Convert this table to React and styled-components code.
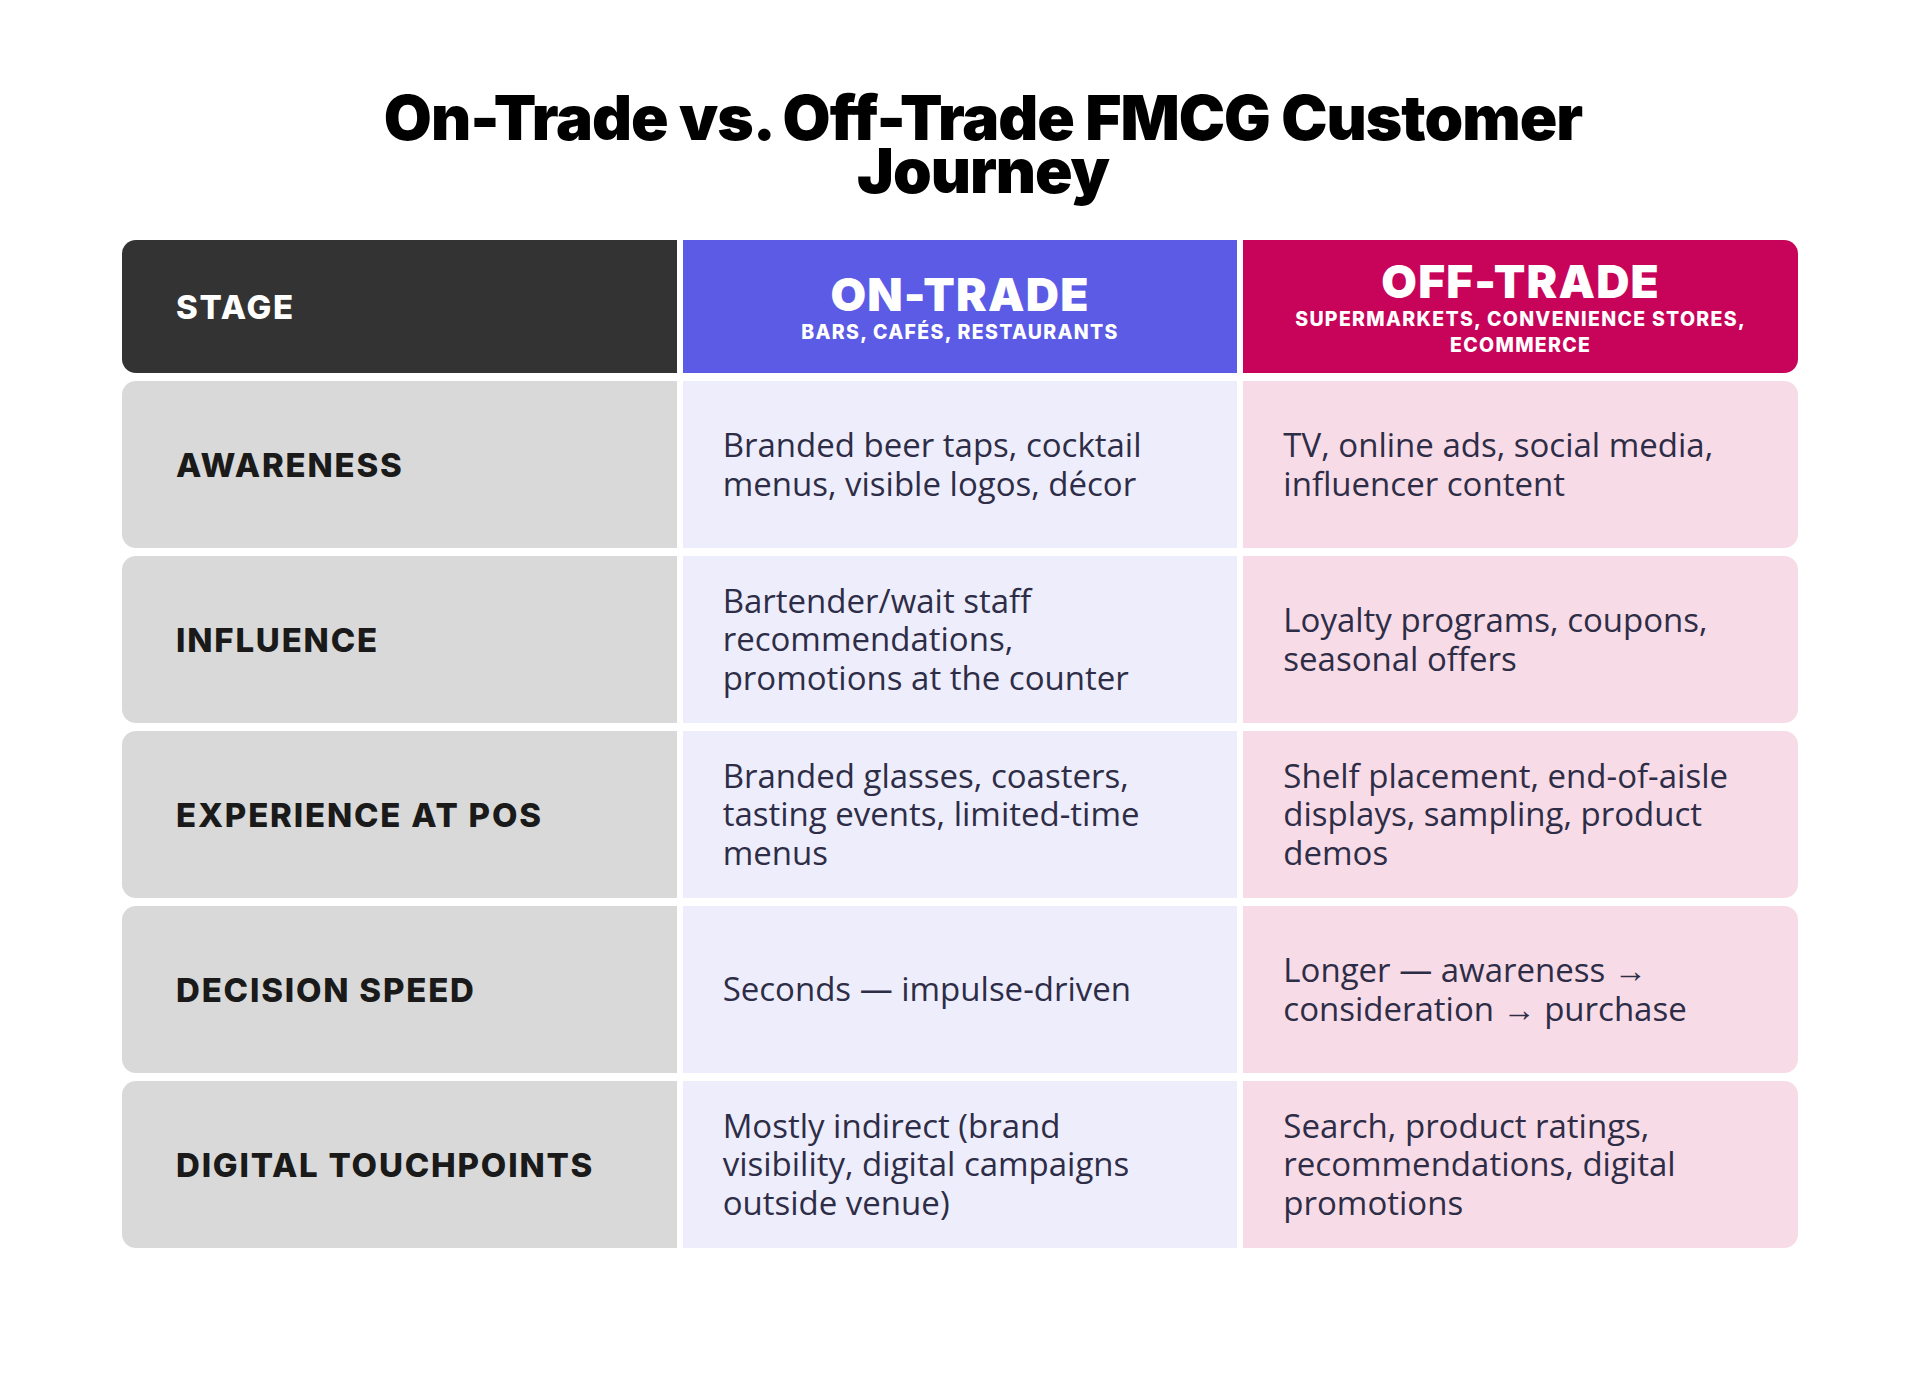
import React from "react";
import styled, { createGlobalStyle } from "styled-components";

const GlobalStyle = createGlobalStyle`
  body {
    margin: 0;
    background: #ffffff;
  }
`;

const Page = styled.div`
  width: 1920px;
  min-height: 1379px;
  padding-top: 91px;
  box-sizing: border-box;
  background: #ffffff;
`;

const Title = styled.h1`
  margin: 0 0 43px;
  padding-left: 46px;
  text-align: center;
  font-family: Inter, "Liberation Sans", sans-serif;
  font-weight: 900;
  font-size: 62px;
  line-height: 53px;
  letter-spacing: -1px;
  color: #000000;
`;

const Table = styled.div`
  width: 1676px;
  margin: 0 auto;
  display: flex;
  flex-direction: column;
  gap: 8px;
`;

const Row = styled.div`
  display: grid;
  grid-template-columns: 1fr 1fr 1fr;
  gap: 6px;
  height: ${(p) => (p.$head ? "133px" : "167px")};

  & > div:first-child {
    border-radius: 14px 0 0 14px;
  }
  & > div:last-child {
    border-radius: 0 14px 14px 0;
  }
`;

const StageCell = styled.div`
  display: flex;
  align-items: center;
  padding-left: 54px;
  background: ${(p) => (p.$head ? "#333333" : "#d9d9d9")};
  color: ${(p) => (p.$head ? "#ffffff" : "#1a1a1a")};
  font-family: Inter, "Liberation Sans", sans-serif;
  font-weight: 800;
  font-size: 33px;
  letter-spacing: 1.8px;
`;

const HeadCell = styled.div`
  display: flex;
  flex-direction: column;
  align-items: center;
  justify-content: center;
  text-align: center;
  background: ${(p) => p.$color};
  color: #ffffff;
  font-family: Inter, "Liberation Sans", sans-serif;
`;

const HeadTitle = styled.div`
  font-weight: 900;
  font-size: 46px;
  line-height: 50px;
  letter-spacing: 1.2px;
`;

const HeadSub = styled.div`
  font-weight: 800;
  font-size: 19.5px;
  line-height: 26px;
  letter-spacing: 1.3px;
  padding: 0 38px;
`;

const BodyCell = styled.div`
  display: flex;
  align-items: center;
  padding: 0 40px;
  background: ${(p) => p.$color};
  color: #2e2d47;
  font-family: "Open Sans", "Noto Sans", sans-serif;
  font-size: 33px;
  line-height: 38.5px;
`;

const rows = [
  {
    stage: "AWARENESS",
    on: "Branded beer taps, cocktail menus, visible logos, décor",
    off: "TV, online ads, social media, influencer content",
  },
  {
    stage: "INFLUENCE",
    on: "Bartender/wait staff recommendations, promotions at the counter",
    off: "Loyalty programs, coupons, seasonal offers",
  },
  {
    stage: "EXPERIENCE AT POS",
    on: "Branded glasses, coasters, tasting events, limited-time menus",
    off: "Shelf placement, end-of-aisle displays, sampling, product demos",
  },
  {
    stage: "DECISION SPEED",
    on: "Seconds — impulse-driven",
    off: "Longer — awareness → consideration → purchase",
  },
  {
    stage: "DIGITAL TOUCHPOINTS",
    on: "Mostly indirect (brand visibility, digital campaigns outside venue)",
    off: "Search, product ratings, recommendations, digital promotions",
  },
];

const App = () => {
  return (
    <Page>
      <GlobalStyle />
      <Title>
        On-Trade vs. Off-Trade FMCG Customer
        <br />
        Journey
      </Title>
      <Table>
        <Row $head>
          <StageCell $head>STAGE</StageCell>
          <HeadCell $color="#5b5be6">
            <HeadTitle>ON-TRADE</HeadTitle>
            <HeadSub>BARS, CAFÉS, RESTAURANTS</HeadSub>
          </HeadCell>
          <HeadCell $color="#c8035a">
            <HeadTitle>OFF-TRADE</HeadTitle>
            <HeadSub>SUPERMARKETS, CONVENIENCE STORES, ECOMMERCE</HeadSub>
          </HeadCell>
        </Row>
        {rows.map((r) => (
          <Row key={r.stage}>
            <StageCell>{r.stage}</StageCell>
            <BodyCell $color="#eeedfb">{r.on}</BodyCell>
            <BodyCell $color="#f7dbe6">{r.off}</BodyCell>
          </Row>
        ))}
      </Table>
    </Page>
  );
};

export default App;
